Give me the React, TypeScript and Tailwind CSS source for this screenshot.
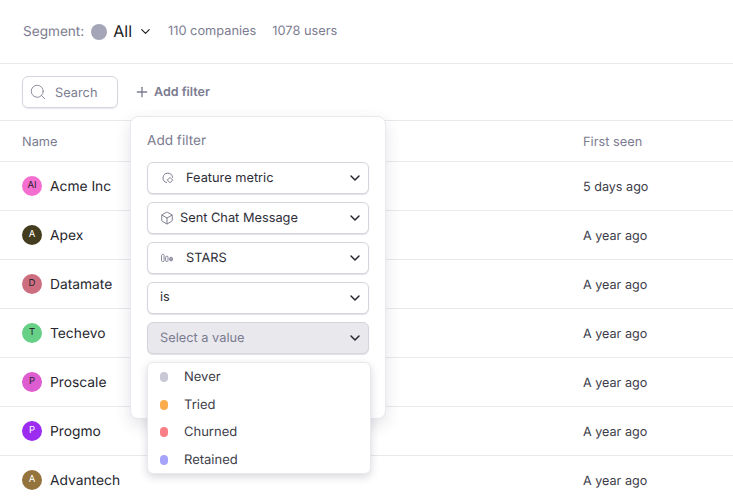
import { ChevronDown, Plus, Search, Box } from "lucide-react";
import type { ReactNode } from "react";

const companies = [
  { name: "Acme Inc", initials: "AI", color: "bg-[#f46fd0]", text: "text-[#26262e]", seen: "5 days ago" },
  { name: "Apex", initials: "A", color: "bg-[#443c1f]", text: "text-white", seen: "A year ago" },
  { name: "Datamate", initials: "D", color: "bg-[#cc6e80]", text: "text-[#26262e]", seen: "A year ago" },
  { name: "Techevo", initials: "T", color: "bg-[#66d087]", text: "text-[#26262e]", seen: "A year ago" },
  { name: "Proscale", initials: "P", color: "bg-[#dd5cd0]", text: "text-[#26262e]", seen: "A year ago" },
  { name: "Progmo", initials: "P", color: "bg-[#9b2cf0]", text: "text-white", seen: "A year ago" },
  { name: "Advantech", initials: "A", color: "bg-[#94733c]", text: "text-white", seen: "A year ago" },
];

const statuses = [
  { label: "Never", color: "bg-[#c9c9d6]" },
  { label: "Tried", color: "bg-[#fbac4f]" },
  { label: "Churned", color: "bg-[#fb7f86]" },
  { label: "Retained", color: "bg-[#a5a3fb]" },
];

function MetricIcon() {
  return (
    <svg width="12" height="12" viewBox="0 0 12 12" fill="none" stroke="#7d7d92" strokeWidth="1" className="block shrink-0">
      <path d="M4.6 10.6a4.8 4.8 0 1 1 6-5.2" strokeLinecap="round" />
      <path d="M8 5.4l2.7 2.7L8 10.8 5.3 8.1z" strokeLinejoin="round" />
    </svg>
  );
}

function BarsIcon() {
  return (
    <svg width="12" height="8" viewBox="0 0 12 8" fill="none" stroke="#7d7d92" strokeWidth="0.9" className="block shrink-0">
      <rect x="0.5" y="0.5" width="2.6" height="7" rx="1" />
      <rect x="4.6" y="2.2" width="2.4" height="5.3" rx="1" />
      <rect x="8.6" y="3.4" width="2.9" height="3.4" rx="1.2" fill="#a5a5b8" />
    </svg>
  );
}

function SelectBox({ children, muted }: { children: ReactNode; muted?: boolean }) {
  return (
    <div
      className={`flex h-[32px] items-center justify-between rounded-md border border-[#d5d5de] pr-[5px] shadow-[0_1px_1px_rgba(60,60,90,0.16)] ${
        muted ? "bg-[#e8e8ed]" : "bg-white"
      }`}
    >
      <div className="flex items-center text-[12.8px] leading-[20px] text-[#2e2e38]">{children}</div>
      <ChevronDown size={16} strokeWidth={2.2} className="text-[#26262e]" />
    </div>
  );
}

export default function App() {
  return (
    <div className="relative h-[504px] w-[733px] overflow-hidden bg-white font-['Inter',sans-serif] text-[13px] leading-[20px] [text-rendering:geometricPrecision]">
      {/* Segment header */}
      <div className="flex h-[64px] items-center border-b border-[#e8e8ed] pl-[23px] text-[#7c7c91]">
        <span className="text-[13.6px]">Segment:</span>
        <span className="ml-[7px] h-4 w-4 rounded-full bg-[#a5a5b8]" />
        <span className="ml-[6px] pb-[2px] text-[16px] text-[#1d1d24]">All</span>
        <ChevronDown size={15} strokeWidth={2} className="ml-[6px] text-[#26262e]" />
        <span className="ml-[15px] pt-[1px] text-[12.8px]">110 companies</span>
        <span className="ml-4 pt-[1px] text-[12.8px]">1078 users</span>
      </div>

      {/* Toolbar */}
      <div className="flex h-[57px] items-center border-b border-[#e8e8ed] pl-[22px]">
        <div className="flex h-[32px] w-[96px] items-center rounded-md border border-[#d5d5de] pl-[6px] text-[#7c7c91] shadow-[0_1px_1px_rgba(60,60,90,0.12)]">
          <Search size={18} strokeWidth={1.3} className="mb-[1px] text-[#8b8b9e]" />
          <span className="ml-2 pt-1 text-[12.8px]">Search</span>
        </div>
        <div className="ml-[16px] flex items-center font-semibold text-[#7c7c91]">
          <Plus size={16} strokeWidth={2} />
          <span className="ml-1 pt-[1px] text-[12.5px]">Add filter</span>
        </div>
      </div>

      {/* Table */}
      <div className="flex h-[41px] items-center justify-between border-b border-[#e8e8ed] pl-[22px] text-[#7c7c91]">
        <span className="pt-1 text-[12.8px]">Name</span>
        <span className="w-[150px] pt-1 text-[12.8px]">First seen</span>
      </div>
      {companies.map((c) => (
        <div key={c.name} className="flex h-[49px] items-center justify-between border-b border-[#e8e8ed] pl-[22px]">
          <div className="flex items-center">
            <span
              className={`flex h-5 w-5 items-center justify-center rounded-full text-[9.5px] ${c.color} ${c.text}`}
            >
              {c.initials}
            </span>
            <span className="ml-2 pt-0.5 text-[13.8px] text-[#26262e]">{c.name}</span>
          </div>
          <span className="w-[150px] pt-1 text-[12.6px] text-[#3d3d49]">{c.seen}</span>
        </div>
      ))}

      {/* Add filter popover */}
      <div className="absolute left-[130px] top-[116px] h-[303px] w-[256px] rounded-lg border border-[#e8e8ed] bg-white px-4 shadow-[0_6px_16px_rgba(60,60,90,0.14)]">
        <div className="flex h-[45px] items-center pt-0.5 text-[13.6px] text-[#7c7c91]">Add filter</div>
        <div className="flex flex-col gap-2">
          <SelectBox>
            <span className="ml-[14px]"><MetricIcon /></span>
            <span className="ml-3 pt-0.5">Feature metric</span>
          </SelectBox>
          <SelectBox>
            <Box size={14} strokeWidth={1.4} className="ml-[12px] text-[#62627a]" />
            <span className="ml-[6px] pt-0.5">Sent Chat Message</span>
          </SelectBox>
          <SelectBox>
            <span className="ml-[13px]"><BarsIcon /></span>
            <span className="ml-[13px] pt-0.5">STARS</span>
          </SelectBox>
          <SelectBox>
            <span className="ml-3">is</span>
          </SelectBox>
          <SelectBox muted>
            <span className="ml-3 pt-0.5 text-[#7c7c91]">Select a value</span>
          </SelectBox>
        </div>
      </div>

      {/* Value dropdown */}
      <div className="absolute left-[147px] top-[362px] h-[112px] w-[224px] rounded-md border border-[#e8e8ed] bg-white pt-[0.5px] shadow-[0_3px_8px_rgba(60,60,90,0.2)]">
        {statuses.map((s) => (
          <div key={s.label} className="flex h-[27.5px] items-center pl-[12px] text-[13px] text-[#3d3d49]">
            <span className={`h-[10px] w-2 rounded-full ${s.color}`} />
            <span className="ml-4">{s.label}</span>
          </div>
        ))}
      </div>
    </div>
  );
}
